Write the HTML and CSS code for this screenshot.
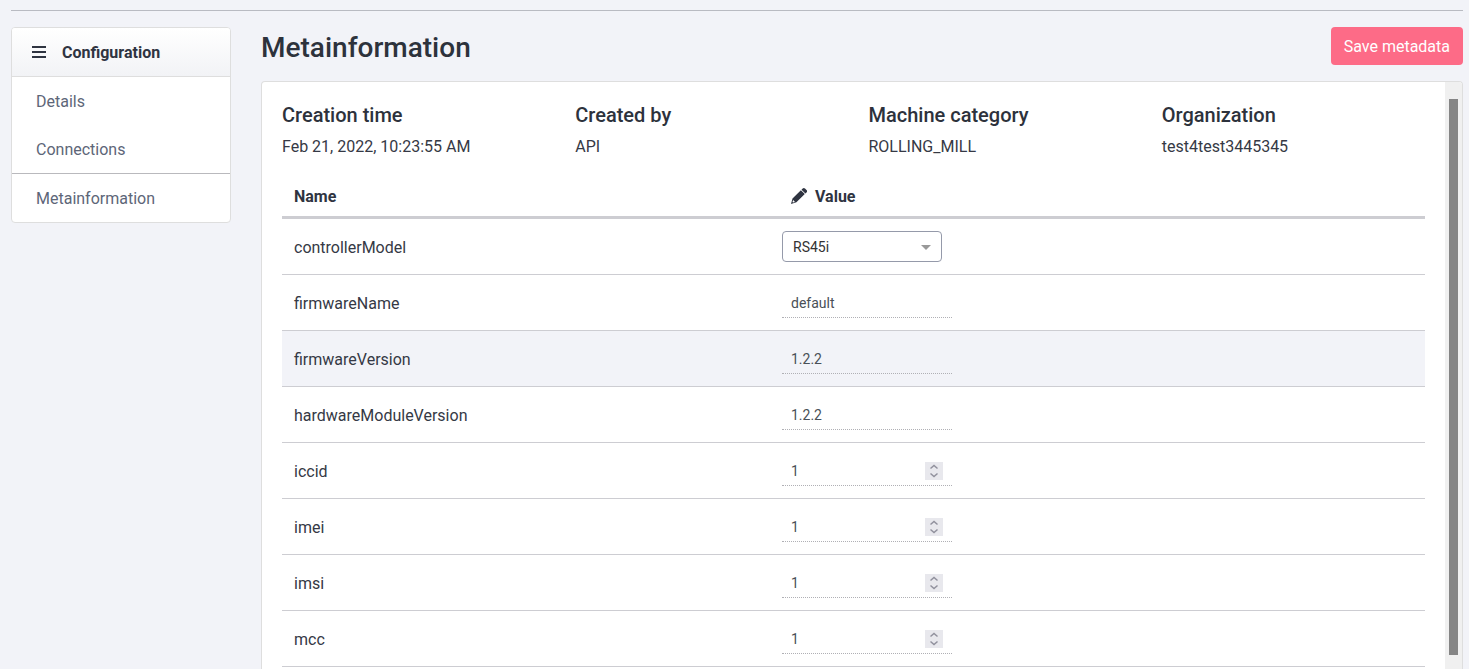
FILE: index.html
```html
<!DOCTYPE html>
<html lang="en">
<head>
<meta charset="utf-8">
<title>Metainformation</title>
<link rel="stylesheet" href="styles.css">
</head>
<body>
<div class="page">
  <div class="layout">
    <nav class="sidebar" aria-label="Configuration">
      <div class="sidebar-head">
        <svg class="menu-icon" viewBox="0 0 14 12" aria-hidden="true"><path d="M0 0h14v2H0zM0 5h14v2H0zM0 10h14v2H0z"/></svg>
        <span class="sidebar-title">Configuration</span>
      </div>
      <a class="nav-item" href="#details">Details</a>
      <a class="nav-item" href="#connections">Connections</a>
      <a class="nav-item nav-item-split" href="#metainformation">Metainformation</a>
    </nav>
    <main class="main">
      <header class="main-head">
        <h1>Metainformation</h1>
        <button class="save" type="button">Save metadata</button>
      </header>
      <section class="panel">
        <div class="content">
          <div class="facts">
            <div><h2>Creation time</h2><p>Feb 21, 2022, 10:23:55 AM</p></div>
            <div><h2>Created by</h2><p>API</p></div>
            <div><h2>Machine category</h2><p>ROLLING_MILL</p></div>
            <div><h2>Organization</h2><p>test4test3445345</p></div>
          </div>
          <table class="meta">
            <thead>
              <tr>
                <th class="col-name">Name</th>
                <th><span class="value-head"><svg class="pencil" viewBox="0 0 16 16" aria-hidden="true"><path fill-rule="evenodd" d="M11.700.600a1.600 1.600 0 0 1 2.300 0l1.500 1.500a1.600 1.600 0 0 1 0 2.300L14.400 5.500 10.500 1.700zM9.900 2.200l3.900 3.900-8.400 8.200L0 16l1.500-5.600zM2.100 12l-.6 2 .5.500 2-.6z"/></svg>Value</span></th>
              </tr>
            </thead>
            <tbody>
              <tr>
                <td><label for="controller">controllerModel</label></td>
                <td><div class="field field-select"><select id="controller"><option>RS45i</option></select><svg class="caret" viewBox="0 0 10 5" aria-hidden="true"><path d="M0 0h10L5 5z"/></svg></div></td>
              </tr>
              <tr>
                <td><label for="fwname">firmwareName</label></td>
                <td><div class="field"><input id="fwname" type="text" value="default"></div></td>
              </tr>
              <tr class="active">
                <td><label for="fwversion">firmwareVersion</label></td>
                <td><div class="field"><input id="fwversion" type="text" value="1.2.2"></div></td>
              </tr>
              <tr>
                <td><label for="hwversion">hardwareModuleVersion</label></td>
                <td><div class="field"><input id="hwversion" type="text" value="1.2.2"></div></td>
              </tr>
              <tr>
                <td><label for="iccid">iccid</label></td>
                <td><div class="field"><input id="iccid" type="number" value="1"><svg class="spin" viewBox="0 0 18 18" aria-hidden="true"><path d="M5.500 6.500 9 3.500l3.500 3M5.500 11.500l3.500 3 3.500-3"/></svg></div></td>
              </tr>
              <tr>
                <td><label for="imei">imei</label></td>
                <td><div class="field"><input id="imei" type="number" value="1"><svg class="spin" viewBox="0 0 18 18" aria-hidden="true"><path d="M5.500 6.500 9 3.500l3.500 3M5.500 11.500l3.500 3 3.500-3"/></svg></div></td>
              </tr>
              <tr>
                <td><label for="imsi">imsi</label></td>
                <td><div class="field"><input id="imsi" type="number" value="1"><svg class="spin" viewBox="0 0 18 18" aria-hidden="true"><path d="M5.500 6.500 9 3.500l3.500 3M5.500 11.500l3.500 3 3.500-3"/></svg></div></td>
              </tr>
              <tr>
                <td><label for="mcc">mcc</label></td>
                <td><div class="field"><input id="mcc" type="number" value="1"><svg class="spin" viewBox="0 0 18 18" aria-hidden="true"><path d="M5.500 6.500 9 3.500l3.500 3M5.500 11.500l3.500 3 3.500-3"/></svg></div></td>
              </tr>
            </tbody>
          </table>
        </div>
        <div class="rail" aria-hidden="true"><div class="thumb"></div></div>
      </section>
    </main>
  </div>
</div>
</body>
</html>
```
FILE: styles.css
```css
* {
  box-sizing: border-box;
}

body {
  margin: 0;
  background: #f2f3f8;
  color: #353945;
  font: 16px/24px Roboto, sans-serif;
}

h1,
h2,
p {
  margin: 0;
}

.page {
  display: flex;
  height: 100vh;
  padding: 10px 6px 0 11px;
  overflow: hidden;
}

.layout {
  display: flex;
  flex: 1;
  gap: 30px;
  align-items: stretch;
  padding-top: 16px;
  border-top: 1px solid #b9bbc2;
}

.sidebar {
  flex: 0 0 220px;
  align-self: flex-start;
  overflow: hidden;
  border: 1px solid #dedede;
  border-radius: 4px;
  background: #fff;
}

.sidebar-head {
  display: flex;
  align-items: center;
  gap: 16px;
  min-height: 49px;
  padding: 0 20px;
  border-bottom: 1px solid #dedede;
  background: linear-gradient(#fff, #f2f3f6);
  color: #2f3441;
  font-weight: 700;
}

.sidebar-title {
  padding-top: 2px;
}

.menu-icon {
  width: 14px;
  height: 12px;
  fill: currentColor;
}

.nav-item {
  display: block;
  padding: 13px 24px 11px;
  color: #5d6678;
  text-decoration: none;
}

.nav-item-split {
  border-top: 1px solid #b9b9bd;
}

.main {
  display: flex;
  flex: 1;
  flex-direction: column;
  min-width: 0;
}

.main-head {
  display: flex;
  align-items: flex-start;
  justify-content: space-between;
  margin-bottom: 12px;
}

h1 {
  color: #2d323c;
  font-size: 28px;
  font-weight: 500;
  line-height: 42px;
}

.save {
  height: 38px;
  padding: 2px 13px 0;
  border: 0;
  border-radius: 4px;
  background: #fd6b87;
  color: #fff;
  font: inherit;
}

.panel {
  display: flex;
  flex: 1;
  min-height: 0;
  overflow: hidden;
  border: 1px solid #dedede;
  border-bottom: 0;
  border-radius: 4px 4px 0 0;
  background: #fff;
}

.content {
  flex: 1;
  padding: 20px 20px 0;
}

.facts {
  display: grid;
  grid-template-columns: repeat(4, 1fr);
  gap: 30px;
  margin-bottom: 17px;
}

h2 {
  margin-bottom: 7px;
  color: #2d323c;
  font-size: 20px;
  font-weight: 500;
  line-height: 26px;
}

.meta {
  width: 100%;
  border-spacing: 0;
  table-layout: fixed;
}

.meta th {
  padding: 9px 12px 7px;
  border-bottom: 3px solid #cdcdd2;
  color: #2f3441;
  text-align: left;
}

.col-name {
  width: 488px;
}

.meta td {
  height: 56px;
  padding: 0 12px;
  border-bottom: 1px solid #cdcdd2;
}

.meta td:first-child {
  padding-top: 2px;
}

.active {
  background: #f2f3f8;
}

.value-head {
  display: flex;
  align-items: center;
  gap: 8px;
  padding-left: 9px;
}

.pencil {
  width: 16px;
  height: 16px;
  margin-bottom: 2px;
  fill: currentColor;
}

.field {
  position: relative;
  width: 170px;
}

.field-select {
  width: 160px;
}

input,
select {
  display: block;
  width: 100%;
  height: 31px;
  margin: 0;
  border: 0;
  background: transparent;
  color: #495057;
  font: 14px/20px Roboto, sans-serif;
  appearance: none;
}

input {
  padding: 2px 9px 0;
  border-bottom: 1px dotted #b0b0b5;
}

input[type="number"] {
  appearance: textfield;
}

input[type="number"]::-webkit-inner-spin-button {
  appearance: none;
  margin: 0;
}

select {
  padding: 0 10px;
  border: 1px solid #959aaa;
  border-radius: 4px;
  background: #fff;
  color: #333;
}

.caret {
  position: absolute;
  top: 14px;
  right: 11px;
  width: 10px;
  height: 5px;
  fill: #999;
  pointer-events: none;
}

.spin {
  position: absolute;
  top: 7px;
  right: 9px;
  width: 18px;
  height: 18px;
  background: #e8e8ed;
  fill: none;
  stroke: #91919d;
  stroke-width: 1.5;
  pointer-events: none;
}

.rail {
  display: flex;
  flex: 0 0 17px;
  padding: 17px 4px 14px;
  background: #f0f0f0;
}

.thumb {
  flex: 1;
  background: #858585;
}
```
